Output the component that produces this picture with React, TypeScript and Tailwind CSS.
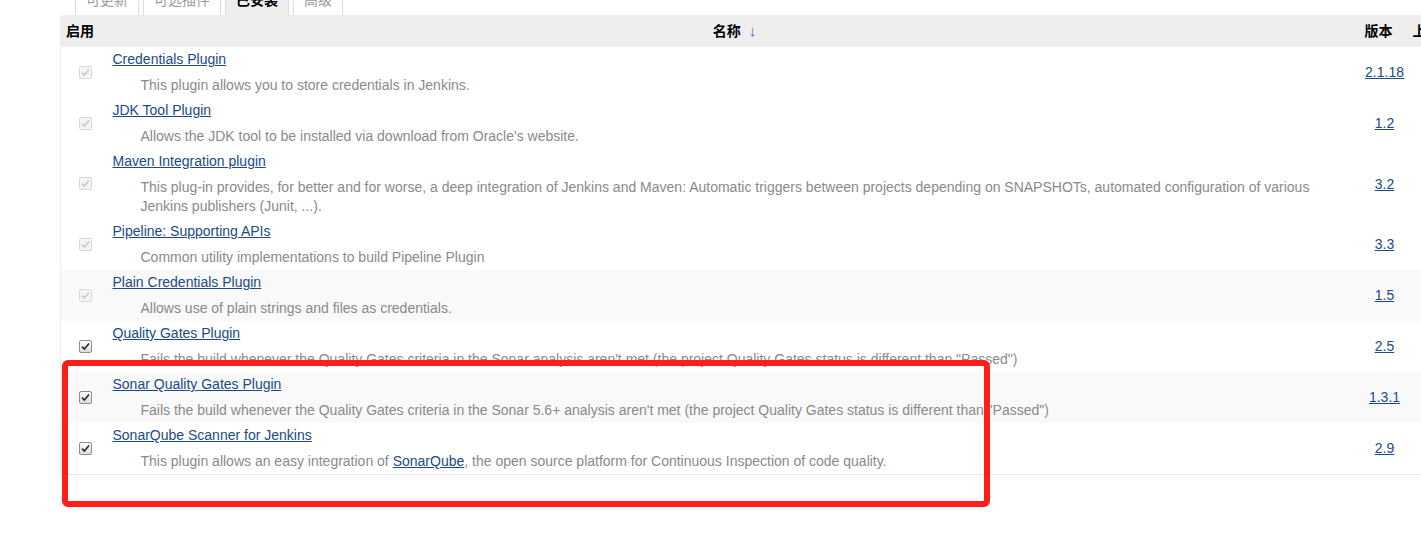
import React from 'react';

interface PluginRow {
  name: string;
  desc: React.ReactNode;
  version: string;
  enabled: boolean;
  striped?: boolean;
}

const plugins: PluginRow[] = [
  {
    name: 'Credentials Plugin',
    desc: 'This plugin allows you to store credentials in Jenkins.',
    version: '2.1.18',
    enabled: false,
  },
  {
    name: 'JDK Tool Plugin',
    desc: "Allows the JDK tool to be installed via download from Oracle's website.",
    version: '1.2',
    enabled: false,
  },
  {
    name: 'Maven Integration plugin',
    desc: 'This plug-in provides, for better and for worse, a deep integration of Jenkins and Maven: Automatic triggers between projects depending on SNAPSHOTs, automated configuration of various Jenkins publishers (Junit, ...).',
    version: '3.2',
    enabled: false,
  },
  {
    name: 'Pipeline: Supporting APIs',
    desc: 'Common utility implementations to build Pipeline Plugin',
    version: '3.3',
    enabled: false,
  },
  {
    name: 'Plain Credentials Plugin',
    desc: 'Allows use of plain strings and files as credentials.',
    version: '1.5',
    enabled: false,
    striped: true,
  },
  {
    name: 'Quality Gates Plugin',
    desc: 'Fails the build whenever the Quality Gates criteria in the Sonar analysis aren\'t met (the project Quality Gates status is different than "Passed")',
    version: '2.5',
    enabled: true,
  },
  {
    name: 'Sonar Quality Gates Plugin',
    desc: 'Fails the build whenever the Quality Gates criteria in the Sonar 5.6+ analysis aren\'t met (the project Quality Gates status is different than "Passed")',
    version: '1.3.1',
    enabled: true,
    striped: true,
  },
  {
    name: 'SonarQube Scanner for Jenkins',
    desc: (
      <>
        This plugin allows an easy integration of{' '}
        <a href="#" className="text-[#204a87] underline">SonarQube</a>, the open source platform for Continuous Inspection of code quality.
      </>
    ),
    version: '2.9',
    enabled: true,
  },
];

const tabs = [
  { label: '可更新', active: false },
  { label: '可选插件', active: false },
  { label: '已安装', active: true },
  { label: '高级', active: false },
];

function Checkbox({ enabled }: { enabled: boolean }) {
  return (
    <span
      className={`inline-flex h-[13px] w-[13px] items-center justify-center rounded-[2px] border ${
        enabled
          ? 'border-[#8e8e8e] bg-gradient-to-b from-[#fdfdfd] to-[#dcdcdc]'
          : 'border-[#dadada] bg-[#f4f4f4]'
      }`}
    >
      <svg width="9" height="9" viewBox="0 0 9 9">
        <path
          d="M1 4.6 L3.4 7 L8 1.6"
          fill="none"
          stroke={enabled ? '#2a2a2a' : '#c9c9c9'}
          strokeWidth="1.6"
        />
      </svg>
    </span>
  );
}

export default function App() {
  return (
    <div
      className="relative h-[539px] w-[1421px] overflow-hidden bg-white"
      style={{ fontFamily: '"Liberation Sans", Arial, "Noto Sans CJK SC", sans-serif' }}
    >
      <div className="pl-[60px]">
        {/* Tabs (top cut off by the screenshot) */}
        <div className="flex h-[15px] gap-[4px] pl-[15px]">
          {tabs.map((t) => (
            <div
              key={t.label}
              className={`-mt-[16px] h-[31px] shrink-0 border border-b-0 border-[#dddddd] px-[10px] pt-[5px] text-[14px] leading-[20px] ${
                t.active ? 'bg-[#eeeeee] font-bold text-black' : 'bg-white text-[#999999]'
              }`}
            >
              {t.label}
            </div>
          ))}
        </div>

        {/* Plugin table */}
        <table className="w-[1500px] table-fixed border-collapse border-l border-[#eeeeee]">
          <colgroup>
            <col className="w-[48px]" />
            <col className="w-[1242px]" />
            <col className="w-[60px]" />
            <col className="w-[150px]" />
          </colgroup>
          <thead>
            <tr className="h-[32px] bg-[#eeeeee] text-[14px] font-bold text-black">
              <th className="rounded-tl-[4px] pl-[5px] text-left font-bold">启用</th>
              <th className="pl-[10px] text-center font-bold">
                名称 <span className="ml-[4px] text-[15px] font-normal text-[#3a6fb5]">↓</span>
              </th>
              <th className="pl-[14px] text-left font-bold">版本</th>
              <th className="pl-[2px] text-left font-bold">上一个版本</th>
            </tr>
          </thead>
          <tbody>
            {plugins.map((p) => (
              <tr
                key={p.name}
                className={`${p.striped ? 'bg-[#f9f9f9]' : 'bg-white'} ${
                  p.name === 'SonarQube Scanner for Jenkins' ? 'border-b border-[#e6e6e6]' : ''
                }`}
              >
                <td className="text-center align-middle">
                  <span className="ml-[1px] inline-flex -translate-y-[1px]">
                    <Checkbox enabled={p.enabled} />
                  </span>
                </td>
                <td className="pb-[3px] pl-[4px] pr-[36px] pt-[2px] align-top">
                  <div className="text-[14px] leading-[20px]">
                    <a href="#" className="text-[#204a87] underline">{p.name}</a>
                  </div>
                  <div className="mt-[7px] pl-[28px] text-[14px] leading-[19px] text-[#8a8a8a]">{p.desc}</div>
                </td>
                <td className="pl-[8px] text-center align-middle text-[14px]">
                  <a href="#" className="text-[#204a87] underline">{p.version}</a>
                </td>
                <td />
              </tr>
            ))}
          </tbody>
        </table>
      </div>

      {/* Red annotation box */}
      <div className="pointer-events-none absolute left-[62px] top-[360px] h-[147px] w-[928px] rounded-[6px] border-[6px] border-[#ff1e1a]" />
    </div>
  );
}
